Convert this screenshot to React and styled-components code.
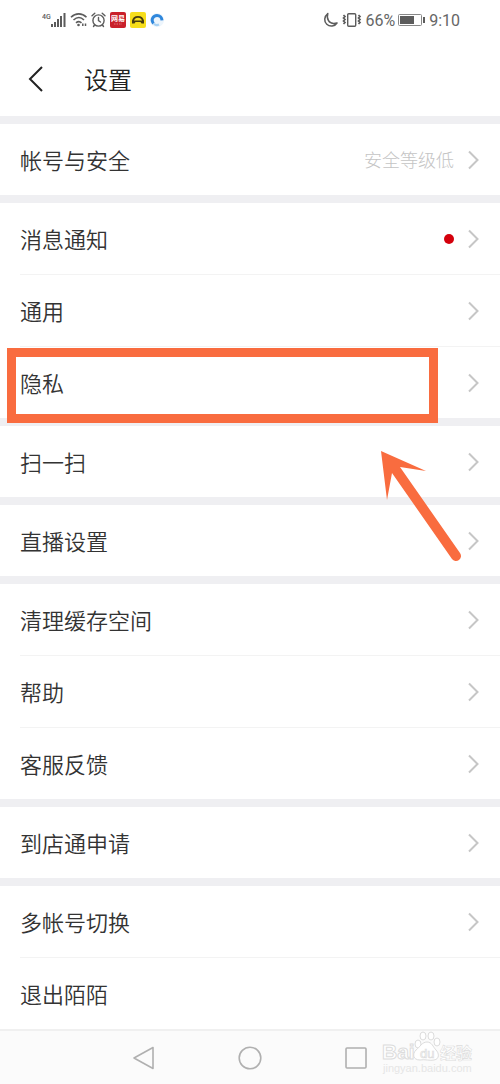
import React from "react";
import styled, { createGlobalStyle } from "styled-components";

const GlobalStyle = createGlobalStyle`
  * {
    box-sizing: border-box;
  }
  body {
    margin: 0;
    background: #fff;
    color: #333;
    font-family: "Noto Sans CJK SC", sans-serif;
    font-weight: 350;
  }
`;

const Page = styled.div`
  display: flex;
  flex-direction: column;
  min-height: 100vh;
`;

const StatusBar = styled.div`
  display: flex;
  align-items: center;
  justify-content: space-between;
  height: 40px;
  padding: 0 40px 0 42px;
  color: #666;
  font-family: Roboto, sans-serif;
  font-size: 16px;
  font-weight: 400;
`;

const StatusGroup = styled.div`
  display: flex;
  align-items: center;
  gap: ${(props) => props.$gap}px;

  svg {
    display: block;
  }
`;

const Header = styled.header`
  display: flex;
  align-items: center;
  gap: 36px;
  height: 76px;
  padding: 2px 24px 0;
`;

const BackButton = styled.button`
  display: flex;
  padding: 0;
  border: none;
  background: none;
`;

const Title = styled.h1`
  margin: 0;
  color: #222;
  font-size: 24px;
  font-weight: 350;
  line-height: 36px;
`;

const Group = styled.section`
  border-top: 8px solid #efeff2;
`;

const Row = styled.div`
  position: relative;

  & + &::before {
    content: "";
    display: block;
    height: 1px;
    margin-left: 20px;
    background: #f3f3f3;
  }
`;

const RowButton = styled.button`
  display: flex;
  align-items: center;
  width: 100%;
  height: 71px;
  padding: 0 20px 2px;
  border: none;
  background: none;
  color: #333;
  font: inherit;
  font-size: 22px;
  line-height: 32px;
  text-align: left;
`;

const Label = styled.span`
  flex: 1;
`;

const Note = styled.span`
  margin-right: 12px;
  color: #c4c4c4;
  font-size: 18px;
  font-weight: 300;
`;

const Dot = styled.span`
  width: 10px;
  height: 10px;
  margin: 2px 12px 0 0;
  border-radius: 50%;
  background: #d4000c;
`;

const Chevron = styled.svg`
  display: block;
  margin-top: 2px;
`;

const Highlight = styled.div`
  position: absolute;
  z-index: 1;
  top: 2px;
  bottom: -5px;
  left: 7px;
  right: 62px;
  border: 9px solid #f96c3f;
  pointer-events: none;
`;

const Arrow = styled.svg`
  position: absolute;
  z-index: 1;
  top: 105px;
  right: 36px;
  pointer-events: none;
`;

const NavBar = styled.nav`
  position: relative;
  display: flex;
  flex: 1;
  align-items: center;
  justify-content: center;
  gap: 82px;
  min-height: 55px;
  border-top: 2px solid #f0f0f0;
  background: #fbfbfb;
`;

const NavButton = styled.button`
  display: flex;
  padding: 0;
  border: none;
  background: none;
`;

const Watermark = styled.svg`
  position: absolute;
  top: 0;
  right: 24px;
`;

const groups = [
  [{ label: "帐号与安全", note: "安全等级低" }],
  [
    { label: "消息通知", dot: true },
    { label: "通用" },
    { label: "隐私", highlight: true },
  ],
  [{ label: "扫一扫" }],
  [{ label: "直播设置" }],
  [{ label: "清理缓存空间" }, { label: "帮助" }, { label: "客服反馈" }],
  [{ label: "到店通申请" }],
  [{ label: "多帐号切换" }, { label: "退出陌陌", plain: true }],
];

const SignalIcon = () => (
  <svg width="25" height="18" viewBox="0 0 25 18" fill="#5c5c5c">
    <text x="0" y="8" fontSize="7" fontWeight="500" fontFamily="Roboto">
      4G
    </text>
    <rect x="9" y="13" width="2" height="3" />
    <rect x="12" y="11" width="2" height="5" />
    <rect x="15" y="8" width="2" height="8" />
    <rect x="18" y="5" width="2" height="11" />
    <rect x="21.500" y="2" width="2" height="14" />
  </svg>
);

const WifiIcon = () => (
  <svg width="18" height="16" viewBox="0 0 18 16" fill="none" stroke="#5c5c5c">
    <path d="M1 5.200C5.500.800 12 .800 16.500 5.200" strokeWidth="1.600" />
    <path d="M3.500 8C7 4.800 10.800 4.800 14 8" strokeWidth="1.600" />
    <path d="M6 10.800C7.800 9.200 9.800 9.200 11.500 10.800" strokeWidth="1.600" />
    <circle cx="8.500" cy="13" r="1.300" fill="#5c5c5c" stroke="none" />
    <path d="M12.800 11.500v2.500M15.500 14v-2.500" strokeWidth="1.500" />
  </svg>
);

const AlarmIcon = () => (
  <svg
    width="15"
    height="16"
    viewBox="0 0 15 16"
    fill="none"
    stroke="#5c5c5c"
    strokeWidth="1.400"
    strokeLinecap="round"
  >
    <circle cx="7.500" cy="8.500" r="5.600" />
    <path d="M7.500 5.500v3.200l2 1.300M1 3.800 3.800 1.200M14 3.800 11.200 1.200M3.500 13 2.500 14.500M11.500 13l1 1.500" />
  </svg>
);

const NewsIcon = () => (
  <svg width="16" height="16" viewBox="0 0 16 16">
    <rect width="16" height="16" rx="2" fill="#c9202b" />
    <text
      x="8"
      y="9"
      fill="#fff"
      fontSize="7"
      fontWeight="700"
      fontFamily="Noto Sans CJK SC"
      textAnchor="middle"
    >
      网易
    </text>
    <path d="M4 12h8" stroke="#e0757b" strokeDasharray="1.500 1" />
  </svg>
);

const CarIcon = () => (
  <svg width="16" height="16" viewBox="0 0 16 16">
    <rect width="16" height="16" rx="2" fill="#f7de1b" />
    <path
      d="M2.800 9.500C3.300 6.500 5 4.900 8 4.900s4.700 1.600 5.200 4.600"
      fill="none"
      stroke="#473d10"
      strokeWidth="1.800"
    />
    <path d="M2 8.500h12v3h-2.500L10.500 10h-5l-1 1.500H2z" fill="#473d10" />
  </svg>
);

const BrowserIcon = () => (
  <svg width="14" height="14" viewBox="0 0 14 14" fill="none">
    <circle cx="7" cy="7" r="7" fill="#edf5fc" />
    <path
      d="M3.500 10.500C.600 7 3 2.500 7 2.500c2.800 0 4.800 2 5 4.800"
      stroke="#2f87dc"
      strokeWidth="3"
    />
    <path d="M4 10.800c1.500 1.500 3.500 1.500 5 .700" stroke="#a5d0f3" strokeWidth="2" />
  </svg>
);

const MoonIcon = () => (
  <svg width="16" height="16" viewBox="0 0 16 16" fill="none">
    <path
      d="M4.800 1.500C1 4.500.800 9.500 3.800 12.300c3 2.800 8 2.200 10.200-1.300-3.800 1-7 .200-8.500-2.300C4.200 6.600 4 4 4.800 1.500z"
      stroke="#5c5c5c"
      strokeWidth="1.500"
      strokeLinejoin="round"
    />
  </svg>
);

const VibrateIcon = () => (
  <svg width="20" height="16" viewBox="0 0 20 16" fill="none" stroke="#5c5c5c">
    <rect x="5.700" y="1.700" width="8" height="12.600" rx="1" strokeWidth="1.400" />
    <path
      d="M1.500 3 3 4.500 1.500 6 3 7.500 1.500 9 3 10.500 1.500 12M16.500 3 18 4.500 16.500 6 18 7.500 16.500 9 18 10.500 16.500 12"
      strokeWidth="1.700"
    />
  </svg>
);

const BatteryIcon = () => (
  <svg width="28" height="14" viewBox="0 0 28 14">
    <rect x=".500" y="1.500" width="23" height="11" rx="1" fill="none" stroke="#888" />
    <rect x="2" y="3" width="14" height="8" fill="#5c5c5c" />
    <rect x="25" y="4" width="2" height="6" fill="#5c5c5c" />
  </svg>
);

const SettingRow = ({ item }) => (
  <Row>
    <RowButton type="button">
      <Label>{item.label}</Label>
      {item.note && <Note>{item.note}</Note>}
      {item.dot && <Dot />}
      {!item.plain && (
        <Chevron width="14" height="20" viewBox="0 0 14 20" fill="none">
          <path d="M3 1.500 11.500 10 3 18.500" stroke="#c6c6c6" strokeWidth="2" />
        </Chevron>
      )}
    </RowButton>
    {item.highlight && (
      <>
        <Highlight />
        <Arrow width="84" height="112" viewBox="0 0 84 112">
          <path
            d="M1 0 46 20 20 16 80 102A5 5 0 0 1 72 108L12 22 7 49z"
            fill="#f96c3f"
          />
        </Arrow>
      </>
    )}
  </Row>
);

const BaiduMark = () => (
  <Watermark width="96" height="50" viewBox="0 0 96 50" aria-hidden="true">
    <g fill="#fff" stroke="#dcdcdc" strokeWidth="1">
      <text x="2" y="28" fontFamily="Liberation Sans" fontWeight="700" fontSize="21">
        Bai
      </text>
      <ellipse cx="38" cy="13" rx="3" ry="4" />
      <ellipse cx="43" cy="5" rx="3" ry="4" />
      <ellipse cx="51" cy="5" rx="3" ry="4" />
      <ellipse cx="57" cy="11" rx="3" ry="4" />
      <path d="M47 11c5 0 6 5 9 8s4 9-2 10c-4 1-9-1-14 0-7 0-8-6-4-10 4-3 6-8 11-8z" />
      <text x="40" y="27" fontFamily="Liberation Sans" fontSize="13" strokeWidth=".700">
        du
      </text>
      <text
        x="60"
        y="28"
        fontFamily="Noto Sans CJK SC"
        fontSize="16"
        fontWeight="700"
        strokeWidth=".600"
      >
        经验
      </text>
    </g>
    <text x="3" y="41" fill="#e6e6e6" fontFamily="Liberation Sans" fontSize="11">
      jingyan.baidu.com
    </text>
  </Watermark>
);

const App = () => {
  return (
    <Page>
      <GlobalStyle />
      <StatusBar>
        <StatusGroup $gap={4}>
          <StatusGroup $gap={3}>
            <SignalIcon />
            <WifiIcon />
            <AlarmIcon />
          </StatusGroup>
          <NewsIcon />
          <CarIcon />
          <BrowserIcon />
        </StatusGroup>
        <StatusGroup $gap={3}>
          <MoonIcon />
          <VibrateIcon />
          <span>66%</span>
          <BatteryIcon />
          <span>9:10</span>
        </StatusGroup>
      </StatusBar>
      <Header>
        <BackButton type="button" aria-label="返回">
          <svg width="24" height="28" viewBox="0 0 24 28" fill="none">
            <path d="M18 2 6 14 18 26" stroke="#222" strokeWidth="2" />
          </svg>
        </BackButton>
        <Title>设置</Title>
      </Header>
      <main>
        {groups.map((items) => (
          <Group key={items[0].label}>
            {items.map((item) => (
              <SettingRow key={item.label} item={item} />
            ))}
          </Group>
        ))}
      </main>
      <NavBar>
        <NavButton type="button" aria-label="返回">
          <svg width="24" height="24" viewBox="0 0 24 24" fill="none" stroke="#b0b0b0">
            <path d="M21 1.500v21L2 12z" strokeWidth="1.600" strokeLinejoin="round" />
          </svg>
        </NavButton>
        <NavButton type="button" aria-label="主屏幕">
          <svg width="24" height="24" viewBox="0 0 24 24" fill="none" stroke="#b0b0b0">
            <circle cx="12" cy="12" r="10.800" strokeWidth="1.600" />
          </svg>
        </NavButton>
        <NavButton type="button" aria-label="最近任务">
          <svg width="24" height="24" viewBox="0 0 24 24" fill="none" stroke="#b0b0b0">
            <rect x="2" y="2" width="20" height="20" rx="1" strokeWidth="1.600" />
          </svg>
        </NavButton>
        <BaiduMark />
      </NavBar>
    </Page>
  );
};

export default App;
